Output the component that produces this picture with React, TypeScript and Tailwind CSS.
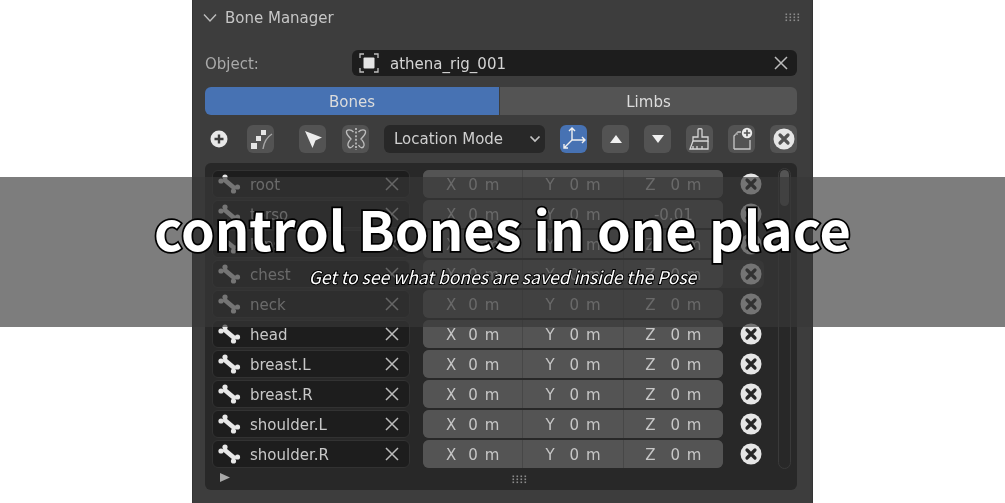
const rows = [
  { name: "root", z: "0 m" },
  { name: "torso", z: "-0.01" },
  { name: "hips", z: "0 m" },
  { name: "chest", z: "0 m", hover: true },
  { name: "neck", z: "0 m" },
  { name: "head", z: "0 m" },
  { name: "breast.L", z: "0 m" },
  { name: "breast.R", z: "0 m" },
  { name: "shoulder.L", z: "0 m" },
  { name: "shoulder.R", z: "0 m" },
];

function Bone() {
  return (
    <svg width="24" height="26" viewBox="0 0 24 26" fill="#e8e8e8" className="shrink-0">
      <path d="M5.5 8 L17.5 18" stroke="#e8e8e8" strokeWidth="4.6" />
      <circle cx="7" cy="6" r="2.6" />
      <circle cx="3" cy="10" r="2.6" />
      <circle cx="19.5" cy="16" r="2.6" />
      <circle cx="15.5" cy="20" r="2.6" />
    </svg>
  );
}

function Cross({ size = 14 }: { size?: number }) {
  return (
    <svg width={size} height={size} viewBox="0 0 14 14" stroke="#bcbcbc" strokeWidth="1.5" fill="none">
      <path d="M1 1 L13 13 M13 1 L1 13" />
    </svg>
  );
}

function CircleX({ bg }: { bg: string }) {
  return (
    <svg width="22" height="22" viewBox="0 0 22 22">
      <circle cx="11" cy="11" r="10.5" fill="#e6e6e6" />
      <path d="M7 7 L15 15 M15 7 L7 15" stroke={bg} strokeWidth="3.2" strokeLinecap="round" />
    </svg>
  );
}

function Grip() {
  const dots = [];
  for (let y = 0; y < 3; y++) {
    for (let x = 0; x < 4; x++) {
      dots.push(<rect key={`${x}-${y}`} x={x * 4 + 0.5} y={y * 3 + 0.5} width="1.6" height="1.6" />);
    }
  }
  return (
    <svg width="16" height="9" viewBox="0 0 16 9" fill="#8c8c8c">
      {dots}
    </svg>
  );
}

function ToolButton({ children, active }: { children: React.ReactNode; active?: boolean }) {
  return (
    <div
      className={`w-[27px] h-[28px] rounded-md flex items-center justify-center ${
        active ? "bg-[#4772b3]" : "bg-[#535353]"
      }`}
    >
      {children}
    </div>
  );
}

function Field({ label, value }: { label: string; value: string }) {
  return (
    <div
      className={`flex-1 bg-[#545454] flex items-center justify-center pt-[2px] text-[#c6c6c6] [word-spacing:2px] ${
        label === "X" ? "gap-[12px]" : "gap-[15px]"
      }`}
    >
      {label && <span>{label}</span>}
      <span>{value}</span>
    </div>
  );
}

export default function App() {
  return (
    <div className="relative w-[1005px] h-[503px] overflow-hidden bg-white font-['DejaVu_Sans',sans-serif]">
      {/* Blender panel */}
      <div className="ml-[192px] w-[621px] h-[503px] bg-[#3d3d3d] border-x border-[#343434] pl-3 pr-[15px] text-[15px] blur-[0.6px]">
        <div className="h-[34px] flex items-center">
          <svg width="14" height="10" viewBox="0 0 14 10" fill="none" stroke="#bdbdbd" strokeWidth="1.4" className="ml-[-2px] mt-[2px]">
            <path d="M1 1.5 L7 8 L13 1.5" />
          </svg>
          <span className="ml-[8px] mt-[3px] text-[#c6c6c6]">Bone Manager</span>
          <div className="ml-auto mr-[-4px]">
            <Grip />
          </div>
        </div>

        {/* Object picker */}
        <div className="mt-4 h-[26px] flex items-center">
          <span className="w-[147px] mt-[2px] text-[#a9a9a9]">Object:</span>
          <div className="flex-1 h-[26px] rounded-md bg-[#1d1d1d] flex items-center pl-[6px] pr-[9px] text-[#d4d4d4]">
            <svg width="22" height="22" viewBox="0 0 22 22" fill="none" stroke="#bfbfbf" strokeWidth="1.3">
              <path d="M2 6 V2 H6 M16 2 H20 V6 M20 16 V20 H16 M6 20 H2 V16" />
              <rect x="5.5" y="5.5" width="11" height="11" rx="1" fill="#e4e4e4" stroke="none" />
            </svg>
            <span className="ml-[10px] mt-[2px]">athena_rig_001</span>
            <div className="ml-auto">
              <Cross />
            </div>
          </div>
        </div>

        {/* Tabs */}
        <div className="mt-[11px] h-[28px] flex gap-px rounded-md overflow-hidden text-[#dcdcdc]">
          <div className="w-[294px] pt-[2px] bg-[#4772b3] flex items-center justify-center">Bones</div>
          <div className="flex-1 pt-[2px] bg-[#545454] flex items-center justify-center">Limbs</div>
        </div>

        {/* Toolbar */}
        <div className="mt-[10px] h-[28px] flex items-center gap-[15px]">
          <div className="w-[27px] flex items-center justify-center">
            <svg width="18" height="18" viewBox="0 0 18 18">
              <circle cx="9" cy="9" r="8.5" fill="#e8e8e8" />
              <path d="M4.5 9 H13.5 M9 4.5 V13.5" stroke="#3d3d3d" strokeWidth="2.4" />
            </svg>
          </div>
          <ToolButton>
            <svg width="24" height="24" viewBox="0 0 24 24" fill="#e4e4e4">
              <rect x="2" y="16" width="6" height="6" />
              <rect x="7" y="9" width="5" height="5" />
              <rect x="12" y="3" width="5" height="5" />
              <path d="M14 22 C15 15 18 10 23 7" fill="none" stroke="#a8a8a8" strokeWidth="1.4" />
            </svg>
          </ToolButton>
          <div className="ml-[10px]">
            <ToolButton>
              <svg width="22" height="22" viewBox="0 0 22 22" fill="#ececec">
                <path d="M3 3 L20 9.5 L13.5 12.5 L10.5 20 Z" />
              </svg>
            </ToolButton>
          </div>
          <div className="ml-[1px]">
            <ToolButton>
              <svg width="24" height="24" viewBox="0 0 24 24" fill="none" stroke="#bdbdbd" strokeWidth="1.3">
                <path d="M12 1 V23" strokeDasharray="2 1.6" stroke="#e0e0e0" />
                <path d="M9.5 5 C7 2 2 2 2.5 5.5 C3 8 5 10 7 12 C5 14 3.5 16 4 18.5 C5 22 8 21 9.5 18" />
                <path d="M14.5 5 C17 2 22 2 21.5 5.5 C21 8 19 10 17 12 C19 14 20.5 16 20 18.5 C19 22 16 21 14.5 18" />
              </svg>
            </ToolButton>
          </div>
          <div className="w-[161px] h-[28px] rounded-md bg-[#282828] flex items-center pl-[10px] pr-[4px] text-[#d0d0d0]">
            <span>Location Mode</span>
            <svg width="12" height="8" viewBox="0 0 12 8" fill="none" stroke="#c4c4c4" strokeWidth="1.7" className="ml-auto">
              <path d="M1.5 1.5 L6 6 L10.5 1.5" />
            </svg>
          </div>
          <ToolButton active>
            <svg width="26" height="26" viewBox="0 0 26 26" fill="none" stroke="#f0f0f0" strokeWidth="1.4">
              <path d="M11 14 V2 M8 5 L11 2 L14 5" />
              <path d="M11 14 H24 M21 11 L24 14 L21 17" />
              <path d="M11 14 L3 22 M3 18 V22 H7" />
            </svg>
          </ToolButton>
          <ToolButton>
            <svg width="12" height="8" viewBox="0 0 12 8" fill="#f0f0f0">
              <path d="M6 0 L12 8 H0 Z" />
            </svg>
          </ToolButton>
          <ToolButton>
            <svg width="12" height="8" viewBox="0 0 12 8" fill="#f0f0f0">
              <path d="M0 0 H12 L6 8 Z" />
            </svg>
          </ToolButton>
          <ToolButton>
            <svg width="24" height="24" viewBox="0 0 24 24" fill="none" stroke="#d6d6d6" strokeWidth="1.3">
              <path d="M10 10 V2.5 C10 1.5 14 1.5 14 2.5 V10 H20 V14 H5 V10 Z" />
              <path d="M5 14 L2 22 H20 V14 M5 22 V19 M9 22 V19 M14 22 V19" />
            </svg>
          </ToolButton>
          <ToolButton>
            <svg width="24" height="24" viewBox="0 0 24 24" fill="none" stroke="#c8c8c8" strokeWidth="1.3">
              <path d="M4 22 V9 L8 5 H11" />
              <path d="M20 13 V22 H4" />
              <path d="M5 8 L8 5 V8 Z" fill="#8f8f8f" stroke="none" />
              <circle cx="17" cy="6" r="5.2" fill="#ececec" stroke="none" />
              <path d="M13.8 6 H20.2 M17 2.8 V9.2" stroke="#535353" strokeWidth="1.6" />
            </svg>
          </ToolButton>
          <ToolButton>
            <CircleX bg="#535353" />
          </ToolButton>
        </div>

        {/* Bone list */}
        <div className="mt-[10px] h-[327px] rounded-md bg-[#282828] pl-[7px] pt-[7px]">
          <div className="flex">
            <div className="w-[552px] mr-[14px] flex flex-col gap-[2px]">
              {rows.map((r) => (
                <div key={r.name} className={`h-[28px] flex rounded-md ${r.hover ? "bg-white/[0.07]" : ""}`}>
                  <div className="w-[198px] rounded-md bg-[#1d1d1d] border border-[#323232] flex items-center pl-[5px] pr-[10px] text-[#c8c8c8]">
                    <Bone />
                    <span className="ml-[8px] mt-[2px]">{r.name}</span>
                    <div className="ml-auto">
                      <Cross />
                    </div>
                  </div>
                  <div className="ml-[13px] w-[300px] rounded-md overflow-hidden flex gap-px bg-[#474747]">
                    <Field label="X" value="0 m" />
                    <Field label="Y" value="0 m" />
                    <Field label={r.z === "0 m" ? "Z" : ""} value={r.z} />
                  </div>
                  <div className="ml-[15px] w-[26px] flex items-center justify-center">
                    <CircleX bg="#282828" />
                  </div>
                </div>
              ))}
            </div>
            <div className="w-[13px] h-[301px] mt-[-2px] rounded-full border border-[#3a3a3a] p-px">
              <div className="h-[36px] rounded-full bg-[#545454]" />
            </div>
          </div>
          <div className="relative h-[14px] mt-[3px] flex items-center justify-center">
            <svg width="10" height="9" viewBox="0 0 10 9" fill="#a8a8a8" className="absolute left-[8px] top-[1px]">
              <path d="M0 0 L10 4.5 L0 9 Z" />
            </svg>
            <div className="ml-[30px]">
              <Grip />
            </div>
          </div>
        </div>
      </div>

      {/* Caption band over the screenshot */}
      <div className="absolute inset-x-0 top-[177px] h-[150px] bg-[rgba(55,55,55,0.65)] flex flex-col items-center font-['Noto_Sans_CJK_JP',sans-serif] text-white">
        <div className="mt-[11px] text-[54px] leading-[80px] font-bold [-webkit-text-stroke:3.5px_black] [paint-order:stroke_fill] blur-[0.3px]">
          control Bones in one place
        </div>
        <div className="mt-[-4px] text-[17.5px] leading-[26px] italic [-webkit-text-stroke:2px_black] [paint-order:stroke_fill] blur-[0.3px]">
          Get to see what bones are saved inside the Pose
        </div>
      </div>
    </div>
  );
}
